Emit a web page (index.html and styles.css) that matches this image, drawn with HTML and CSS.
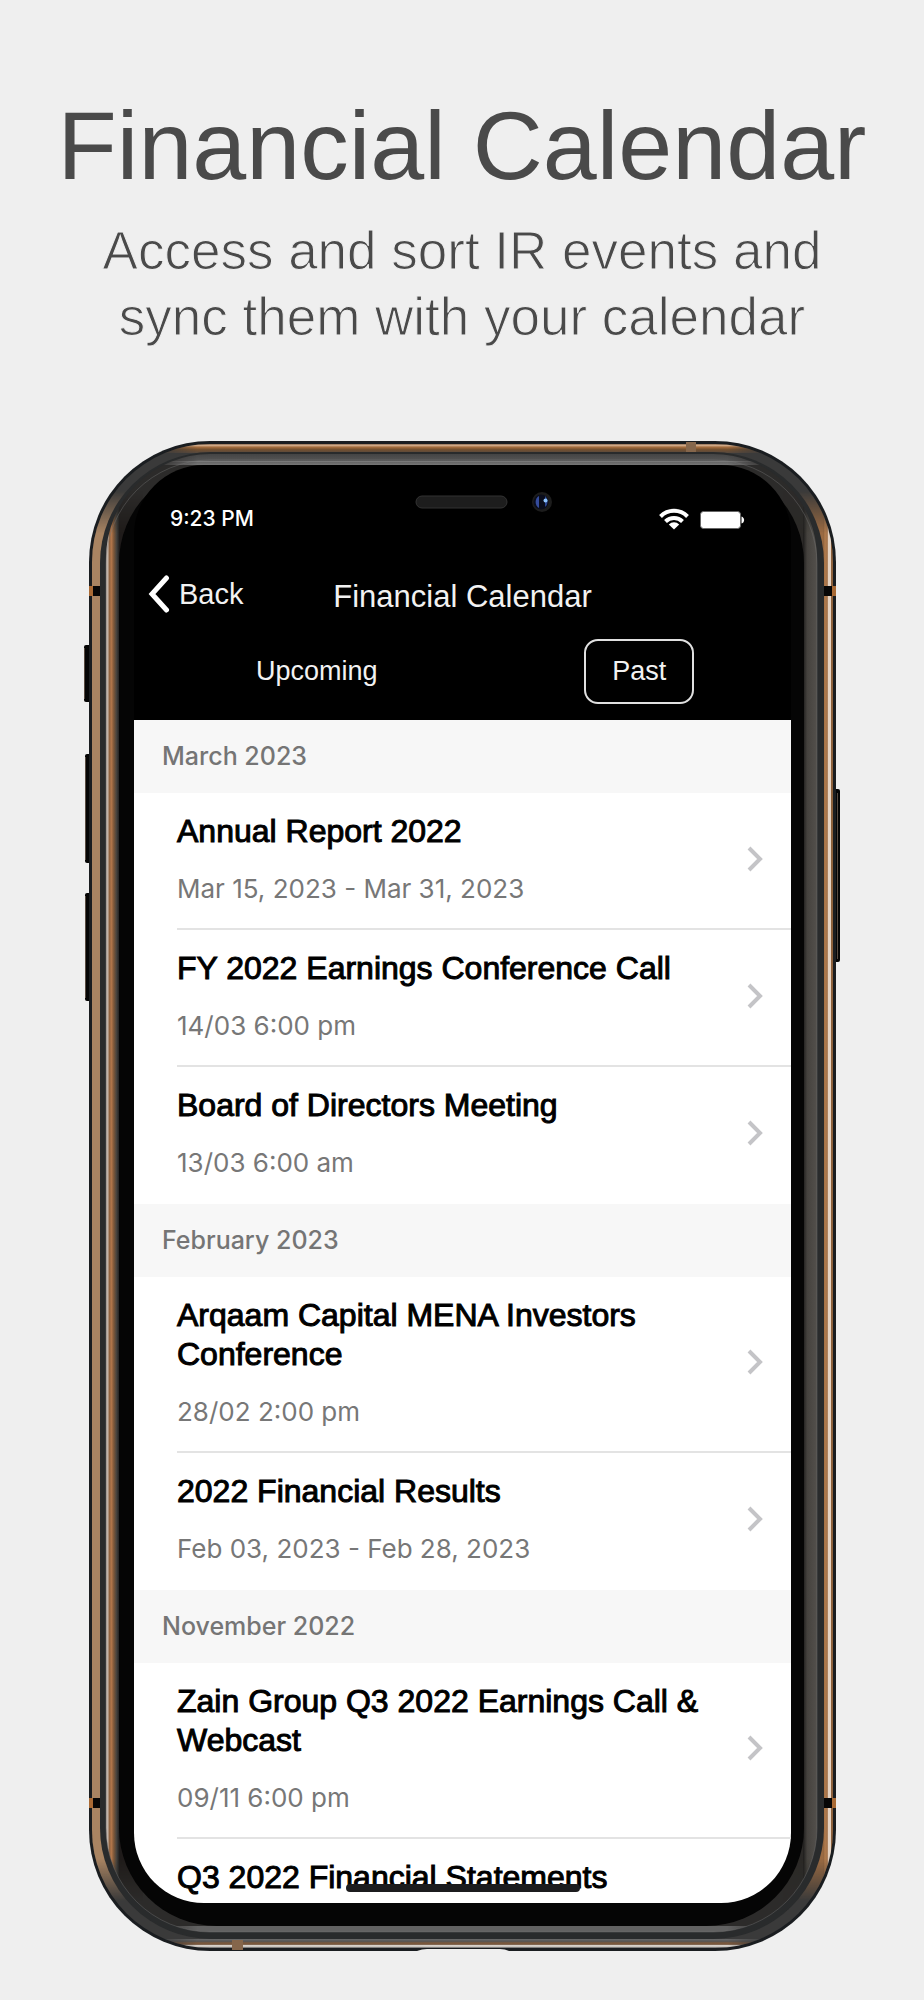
FILE: index.html
```html
<!DOCTYPE html>
<html lang="en">
<head>
<meta charset="utf-8">
<meta name="viewport" content="width=device-width, initial-scale=1">
<title>Financial Calendar</title>
<link rel="stylesheet" href="styles.css">
</head>
<body>
<header class="promo">
  <h1 class="promo-title">Financial Calendar</h1>
  <p class="promo-text">Access and sort IR events and<br>sync them with your calendar</p>
</header>
<main class="phone">
  <svg class="phone-frame" viewBox="-6 0 759 1510" preserveAspectRatio="none" aria-hidden="true">
    <defs>
      <linearGradient id="fade" x1="0" y1="0" x2="0" y2="1">
        <stop offset="0" stop-color="#000"/><stop offset=".03" stop-color="#fff"/>
        <stop offset=".97" stop-color="#fff"/><stop offset="1" stop-color="#000"/>
      </linearGradient>
      <linearGradient id="fadeX">
        <stop offset="0" stop-color="#000"/><stop offset=".07" stop-color="#fff"/>
        <stop offset=".93" stop-color="#fff"/><stop offset="1" stop-color="#000"/>
      </linearGradient>
      <mask id="sides" maskUnits="userSpaceOnUse" x="0" y="0" width="747" height="1510"><rect x="0" y="50" width="747" height="1410" fill="url(#fade)"/></mask>
      <mask id="ends" maskUnits="userSpaceOnUse" x="0" y="0" width="747" height="1510"><rect x="65" y="0" width="617" height="1510" fill="url(#fadeX)"/></mask>
      <linearGradient id="topBand" x1="0" y1="0" x2="0" y2="1">
        <stop offset="0" stop-color="#8a6a50"/><stop offset=".15" stop-color="#d3ad8c"/><stop offset=".35" stop-color="#a56d3d"/>
        <stop offset=".6" stop-color="#74502f"/><stop offset="1" stop-color="#57493e"/>
      </linearGradient>
      <linearGradient id="bottomBand" x1="0" y1="0" x2="0" y2="1">
        <stop offset="0" stop-color="#6a6a6a"/><stop offset=".25" stop-color="#555"/><stop offset=".45" stop-color="#7d583a"/>
        <stop offset=".6" stop-color="#72543c"/><stop offset=".68" stop-color="#dcd5ce"/><stop offset=".85" stop-color="#c9c4bf"/><stop offset="1" stop-color="#555"/>
      </linearGradient>
      <linearGradient id="rightBand">
        <stop offset="0" stop-color="#8c603b"/><stop offset=".2" stop-color="#b07a4c"/><stop offset=".44" stop-color="#a2724a"/>
        <stop offset=".5" stop-color="#e5d3c3"/><stop offset=".78" stop-color="#e5d3c3"/><stop offset=".84" stop-color="#8c603b"/><stop offset="1" stop-color="#8c603b"/>
      </linearGradient>
      <linearGradient id="leftInner">
        <stop offset="0" stop-color="#a99f98"/><stop offset=".15" stop-color="#c7b9ae"/><stop offset=".24" stop-color="#8e6240"/>
        <stop offset=".42" stop-color="#b0754a"/><stop offset=".6" stop-color="#7d5738"/><stop offset=".8" stop-color="#48443f"/><stop offset="1" stop-color="#222"/>
      </linearGradient>
      <linearGradient id="rightInner">
        <stop offset="0" stop-color="#1d1c1b"/><stop offset=".3" stop-color="#45423e"/><stop offset="1" stop-color="#53504c"/>
      </linearGradient>
      <linearGradient id="topInner" x1="0" y1="0" x2="0" y2="1">
        <stop offset="0" stop-color="#444"/><stop offset=".6" stop-color="#555"/><stop offset=".62" stop-color="#8a8a8a"/>
        <stop offset=".75" stop-color="#666"/><stop offset="1" stop-color="#777"/>
      </linearGradient>
      <clipPath id="rim"><rect x="3" y="3" width="741" height="1504" rx="118"/></clipPath>
      <clipPath id="lip"><rect x="17" y="13" width="711" height="1478" rx="104"/></clipPath>
    </defs>
    <g fill="#050505">
      <rect x="-5" y="204" width="8" height="57" rx="2"/>
      <rect x="-4" y="313" width="7" height="109" rx="2"/>
      <rect x="-4" y="452" width="7" height="108" rx="2"/>
      <rect x="744" y="348" width="7" height="173" rx="2"/>
    </g>
    <path d="M-4.500 207V258M-3.500 316V419M-3.500 455V557M748.500 352V518" fill="none" stroke="#7c6a5b" stroke-width="1" stroke-opacity=".7"/>
    <rect width="747" height="1510" rx="121" fill="#1a1d20"/>
    <g clip-path="url(#rim)">
      <rect width="747" height="1510" fill="#3a3a3a"/>
      <path d="M48 42 84 22 150 14 70 34ZM700 42 663 22 597 14 677 34ZM48 1468 84 1488 150 1496 70 1476ZM700 1468 663 1488 597 1496 677 1476Z" fill="#050505"/>
      <g mask="url(#ends)">
        <rect x="60" y="3" width="630" height="9" fill="url(#topBand)"/>
        <rect x="60" y="1498" width="630" height="9" fill="url(#bottomBand)"/>
      </g>
      <g mask="url(#sides)">
        <rect x="3" y="50" width="40" height="1410" fill="#a98462"/>
        <rect x="704" y="50" width="30" height="1410" fill="#9a6a42"/>
        <rect x="734" y="50" width="10" height="1410" fill="url(#rightBand)"/>
      </g>
    </g>
    <rect x="11" y="11" width="724" height="1487" rx="111" fill="#292b2c"/>
    <g clip-path="url(#lip)">
      <rect x="17" y="13" width="711" height="1480" fill="#2c2b2a"/>
      <g mask="url(#ends)">
        <rect x="60" y="13" width="630" height="11" fill="url(#topInner)"/>
        <rect x="60" y="1485" width="630" height="7" fill="#626262"/>
      </g>
      <g mask="url(#sides)">
        <rect x="17" y="50" width="13" height="1410" fill="url(#leftInner)"/>
        <rect x="30" y="50" width="24" height="1410" fill="#1f1b1a"/>
        <rect x="694" y="50" width="21" height="1410" fill="#2b2927"/>
        <rect x="714" y="50" width="14" height="1410" fill="url(#rightInner)"/>
      </g>
    </g>
    <rect x="17" y="19" width="711" height="1472" rx="104" fill="none" stroke="#777" stroke-opacity=".4"/>
    <rect x="30" y="24" width="685" height="1461" rx="98" fill="#050505"/>
    <path d="M0 145H4V155H0ZM743 145H747V155H743ZM0 1357H4V1367H0ZM743 1357H747V1367H743Z" fill="#a96a35"/>
    <path d="M4 145H11V155H4ZM735 145H743V155H735ZM4 1357H11V1367H4ZM735 1357H743V1367H735Z" fill="#060606"/>
    <path d="M597 1H607V11H597ZM143 1499H154V1509H143Z" fill="#85664b"/>
    <path d="M328 1510Q333 1508 338 1508H411Q416 1508 420 1510Z" fill="#efefef"/>
  </svg>
  <div class="screen">
    <div class="status">
      <span class="clock">9:23 PM</span>
      <svg class="sensors" viewBox="0 0 140 24" aria-hidden="true">
        <rect x="1" y="6" width="91" height="12" rx="6" fill="#1d1d1d" stroke="#333"/>
        <circle cx="127" cy="12" r="10" fill="#1c1c1c"/>
        <circle cx="126" cy="12" r="7.500" fill="#0a0d1c"/>
        <path d="M124 6V18A7 7 0 0 1 124 6Z" fill="#354c9c"/>
        <path d="M130 6A7 7 0 0 1 130 17Z" fill="#2b458f"/>
        <circle cx="130.500" cy="10.500" r="2" fill="#8fc6ff"/>
      </svg>
      <svg class="signals" viewBox="0 0 86 22" aria-hidden="true">
        <g fill="none" stroke="#fff" stroke-width="4">
          <path d="M1.500 8.500A19 19 0 0 1 28.500 8.500"/>
          <path d="M6.500 13.500A12 12 0 0 1 23.500 13.500"/>
        </g>
        <path d="M15 21.500 9.800 16.400A7.500 7.500 0 0 1 20.200 16.400Z" fill="#fff"/>
        <rect x="41.500" y="3.500" width="40" height="17" rx="3" fill="#fff" stroke="#666"/>
        <path d="M82.500 8.500C86 9.500 86 14.500 82.500 15.500Z" fill="#fff"/>
      </svg>
    </div>
    <nav class="navbar">
      <button class="back" type="button">
        <svg class="back-icon" viewBox="0 0 22 38" aria-hidden="true"><path d="M18.500 3 4 19 18.500 35" fill="none" stroke="#fff" stroke-width="5" stroke-linecap="round"/></svg>
        Back
      </button>
      <h2 class="navbar-title">Financial Calendar</h2>
    </nav>
    <div class="tabs">
      <button class="tab" type="button">Upcoming</button>
      <button class="tab tab-active" type="button">Past</button>
    </div>
    <div class="events">
      <h3 class="month">March 2023</h3>
      <ul class="list">
        <li class="event"><div class="info"><h4 class="name">Annual Report 2022</h4><p class="date">Mar 15, 2023 - Mar 31, 2023</p></div><svg class="chevron" viewBox="0 0 16 26" aria-hidden="true"><path d="M2 2 13 13 2 24"/></svg></li>
        <li class="event"><div class="info"><h4 class="name">FY 2022 Earnings Conference Call</h4><p class="date">14/03 6:00 pm</p></div><svg class="chevron" viewBox="0 0 16 26" aria-hidden="true"><path d="M2 2 13 13 2 24"/></svg></li>
        <li class="event"><div class="info"><h4 class="name">Board of Directors Meeting</h4><p class="date">13/03 6:00 am</p></div><svg class="chevron" viewBox="0 0 16 26" aria-hidden="true"><path d="M2 2 13 13 2 24"/></svg></li>
      </ul>
      <h3 class="month">February 2023</h3>
      <ul class="list">
        <li class="event"><div class="info"><h4 class="name">Arqaam Capital MENA Investors Conference</h4><p class="date">28/02 2:00 pm</p></div><svg class="chevron" viewBox="0 0 16 26" aria-hidden="true"><path d="M2 2 13 13 2 24"/></svg></li>
        <li class="event"><div class="info"><h4 class="name">2022 Financial Results</h4><p class="date">Feb 03, 2023 - Feb 28, 2023</p></div><svg class="chevron" viewBox="0 0 16 26" aria-hidden="true"><path d="M2 2 13 13 2 24"/></svg></li>
      </ul>
      <h3 class="month">November 2022</h3>
      <ul class="list">
        <li class="event"><div class="info"><h4 class="name">Zain Group Q3 2022 Earnings Call &amp; Webcast</h4><p class="date">09/11 6:00 pm</p></div><svg class="chevron" viewBox="0 0 16 26" aria-hidden="true"><path d="M2 2 13 13 2 24"/></svg></li>
        <li class="event event-last"><div class="info"><h4 class="name">Q3 2022 Financial Statements</h4></div></li>
      </ul>
      <div class="home-bar"></div>
    </div>
  </div>
</main>
</body>
</html>
```
FILE: styles.css
```css
* { box-sizing: border-box; }

body {
  margin: 0;
  background: #efefef;
  color: #4a4a4a;
  font-family: "Liberation Sans", Arial, sans-serif;
}

h1, h2, h3, h4, p, ul { margin: 0; padding: 0; font-weight: 400; }
ul { list-style: none; }

button {
  border: 0;
  padding: 0;
  background: none;
  color: inherit;
  font-family: inherit;
}

.promo { padding: 90px 20px 0; text-align: center; }

.promo-title { font-size: 97px; line-height: 112px; }

/* The background-coloured stroke trims the letters to a light weight. */
.promo-text {
  margin-top: 16px;
  font-size: 53px;
  line-height: 66px;
  -webkit-text-stroke: 1px #efefef;
}

.phone {
  position: relative;
  margin: 91px 88px 49px 89px;
  padding: 24px 45px 48px;
}

.phone-frame {
  position: absolute;
  top: 0;
  left: -6px;
  width: calc(100% + 12px);
  height: 100%;
}

.screen {
  position: relative;
  overflow: hidden;
  border-radius: 70px;
  background: #000;
  color: #f2f2f2;
}

.status {
  display: grid;
  grid-template-columns: 1fr 140px 190px;
  align-items: center;
  padding: 25px 46px 0 36px;
}

.clock {
  font-family: Inter, sans-serif;
  font-weight: 500;
  font-size: 21px;
  line-height: 58px;
  color: #fff;
}

.sensors { align-self: start; width: 140px; height: 24px; }
.signals { justify-self: end; width: 86px; height: 22px; }

.navbar {
  display: grid;
  grid-template-columns: 1fr auto 1fr;
  align-items: start;
  padding: 26px 14px 0;
}

.back {
  display: flex;
  align-items: center;
  gap: 9px;
  font-size: 29px;
  line-height: 40px;
}

.back-icon { width: 22px; height: 38px; }

.navbar-title { font-size: 31px; line-height: 46px; }

.tabs {
  display: grid;
  grid-template-columns: 9fr 8fr;
  justify-items: center;
  padding: 19px 0 16px 12px;
}

.tab {
  padding: 0 26px;
  border: 2px solid transparent;
  border-radius: 14px;
  font-size: 27px;
  line-height: 61px;
}

.tab-active { border-color: #e0e0e0; }

.events {
  position: relative;
  background: #fff;
  color: #000;
}

.month {
  padding: 0 28px;
  background: #f7f7f7;
  color: #757575;
  font-family: Inter, sans-serif;
  font-weight: 500;
  font-size: 25px;
  line-height: 73px;
}

.event {
  display: flex;
  align-items: center;
  justify-content: space-between;
  gap: 24px;
  margin-left: 43px;
  padding: 19px 28px 23px 0;
  border-bottom: 2px solid #e3e3e3;
}

.event:last-child { border-bottom-color: transparent; }
.event-last { padding-bottom: 4px; }

.name {
  font-size: 32px;
  line-height: 39px;
  -webkit-text-stroke: 1px #000;
}

.date {
  margin-top: 22px;
  color: #777;
  font-family: Inter, sans-serif;
  font-size: 26px;
  line-height: 32px;
}

.chevron {
  flex: none;
  width: 16px;
  height: 26px;
  fill: none;
  stroke: #c4c4c7;
  stroke-width: 4;
}

.home-bar {
  position: absolute;
  bottom: 11px;
  left: 50%;
  width: 234px;
  height: 8px;
  margin-left: -117px;
  border-radius: 4px;
  background: #1c1c1e;
}
```
